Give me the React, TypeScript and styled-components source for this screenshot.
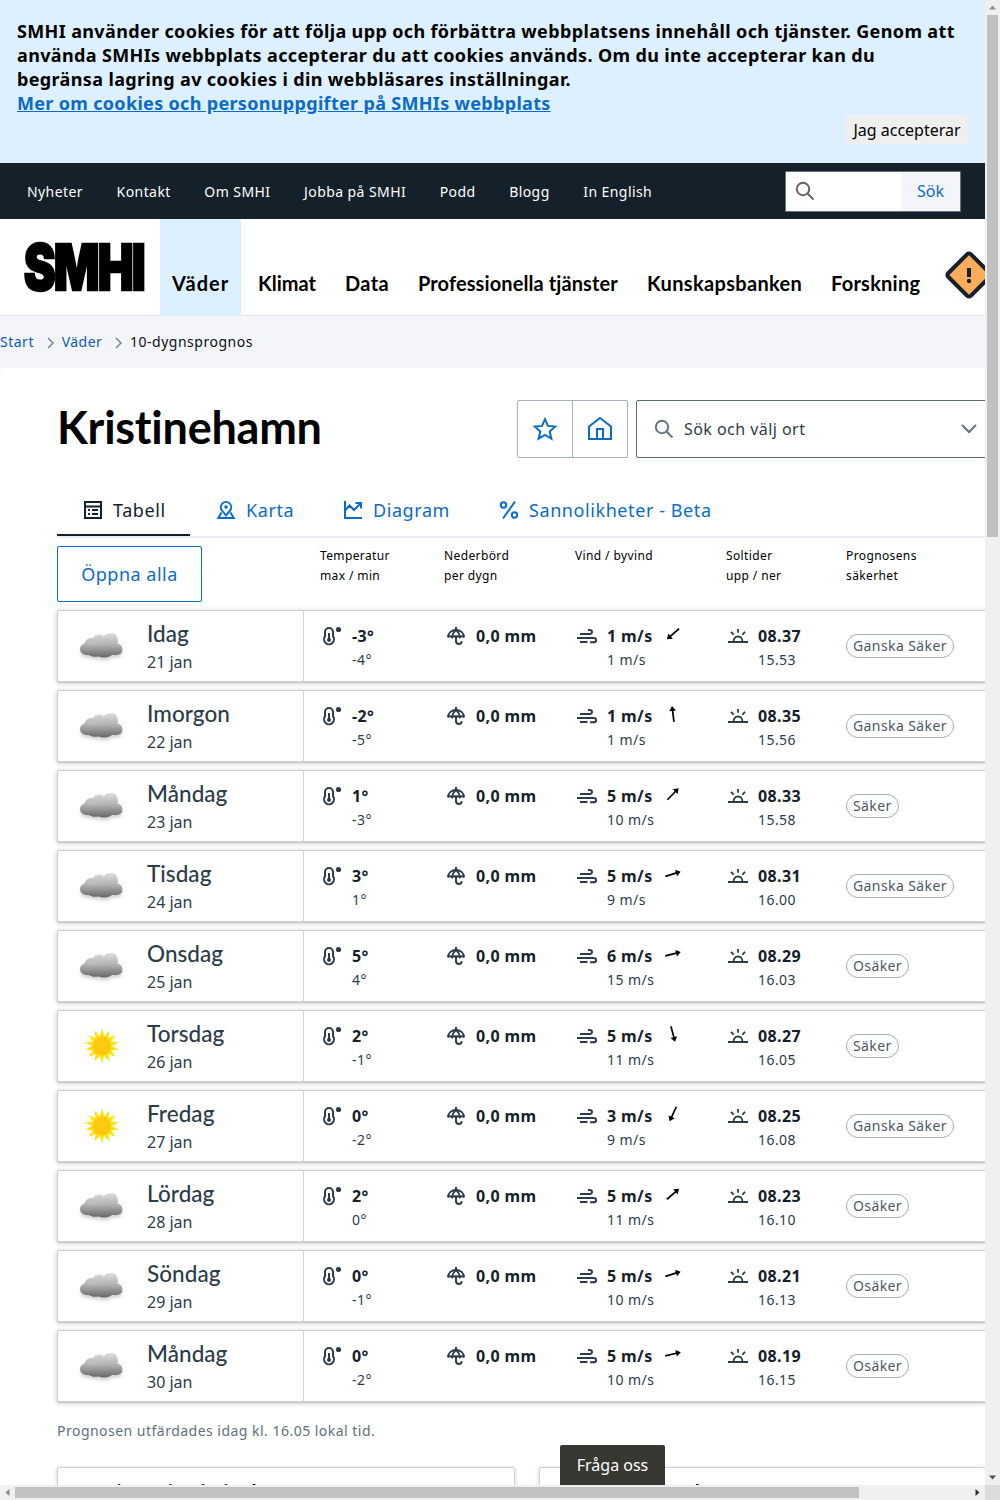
import React from 'react';
import styled, { createGlobalStyle, css } from 'styled-components';

const ink = '#14212b';
const slate = '#2c3c49';
const link = '#0b6bc8';
const sans = `'Noto Sans', 'Liberation Sans', sans-serif`;
const display = `Lato, 'Noto Sans', sans-serif`;

const GlobalStyle = createGlobalStyle`
  * { box-sizing: border-box; }
  html, body { margin: 0; padding: 0; }
  body { background: #fff; font-family: ${sans}; color: #000; overflow: hidden; }
  a { color: inherit; text-decoration: none; }
  button { font: inherit; }
`;

const Window = styled.div`
  display: grid;
  grid-template-columns: 985px 15px;
  grid-template-rows: 1485px 15px;
  width: 1000px;
  height: 1500px;
  overflow: hidden;
`;

const Viewport = styled.div`
  position: relative;
  overflow: hidden;
  background: #fff;
`;

const PageBody = styled.div`
  width: 1174px;
`;

/* ---------- cookie notice ---------- */
const Cookie = styled.section`
  width: 985px;
  height: 163px;
  padding: 19px 17px 0;
  background: #ddf0ff;
  font-weight: 700;
  font-size: 18px;
  line-height: 24px;
  letter-spacing: 0.36px;
  white-space: nowrap;
`;
const CookieLink = styled.a`
  color: ${link};
  text-decoration: underline;
  letter-spacing: 0.32px;
`;
const AcceptRow = styled.div`
  display: flex;
  justify-content: flex-end;
`;
const Accept = styled.button`
  width: 122px;
  height: 29px;
  border: 0;
  border-radius: 2px;
  padding: 1px 0 0;
  background: #efefef;
  color: #000;
  font-weight: 400;
  font-size: 16px;
  line-height: 28px;
`;

/* ---------- dark top bar ---------- */
const TopBar = styled.div`
  display: flex;
  justify-content: space-between;
  align-items: center;
  width: 985px;
  height: 56px;
  padding: 0 24px 0 27px;
  background: ${ink};
`;
const TopLinks = styled.nav`
  display: flex;
  gap: 33.6px;
  color: #fff;
  font-size: 14px;
  line-height: 24px;
  letter-spacing: 0.42px;
  padding-top: 2px;
`;
const TopSearch = styled.div`
  display: flex;
  width: 176px;
  height: 41px;
  border: 1px solid #65737e;
  border-radius: 1px;
  background: #fff;
`;
const TopInput = styled.div`
  flex: 1;
  padding: 7px 0 0 7px;
  svg { display: block; }
`;
const TopSubmit = styled.button`
  width: 59px;
  border: 0;
  padding: 0;
  background: #f4f5f8;
  color: ${link};
  font-size: 16px;
`;

/* ---------- main navigation ---------- */
const Header = styled.header`
  display: flex;
  height: 97px;
  border-bottom: 1px solid #e6e9ec;
`;
const LogoBox = styled.a`
  display: block;
  width: 160px;
  height: 96px;
  padding: 23px 0 0 23px;
  svg { display: block; overflow: visible; }
`;
const MainNav = styled.nav`
  display: flex;
  gap: 5px;
`;
const NavItem = styled.a<{ $w: number; $active?: boolean; $track: number }>`
  width: ${p => p.$w}px;
  height: 97px;
  padding: 49px 0 0 12px;
  background: ${p => (p.$active ? '#ddf0ff' : 'transparent')};
  font-family: ${display};
  font-weight: 700;
  font-size: 20px;
  line-height: 30px;
  letter-spacing: ${p => p.$track}px;
  white-space: nowrap;
`;
const Warning = styled.div`
  padding: 31px 0 0 12px;
`;

/* ---------- breadcrumb ---------- */
const Crumbs = styled.div`
  display: flex;
  align-items: center;
  height: 52px;
  background: #f4f5f8;
  color: #0a5ab4;
  font-size: 14px;
  line-height: 24px;
  letter-spacing: 0.5px;
  svg { margin: 2px 7px 0 11.7px; }
`;
const Current = styled.span`
  color: #0a0f14;
`;

/* ---------- title area ---------- */
const CrumbBase = styled.div`
  background: #f4f5f8;
`;
const Sheet = styled.main`
  width: 1174px;
  padding: 32px 0 0 57px;
  border-radius: 4px;
  background: #fff;
`;
const TitleRow = styled.div`
  display: flex;
  height: 58px;
`;
const Title = styled.h1`
  width: 460px;
  margin: 0;
  font-family: ${display};
  font-weight: 700;
  font-size: 45px;
  line-height: 55px;
  letter-spacing: -0.25px;
`;
const IconPair = styled.div`
  display: flex;
  width: 111px;
  margin-right: 8px;
  border: 1px solid #a3b0bb;
  border-radius: 2px;
`;
const IconButton = styled.button`
  display: flex;
  align-items: center;
  justify-content: center;
  flex: 1;
  border: 0;
  padding: 0;
  background: none;
  color: ${link};
  & + & { border-left: 1px solid #a3b0bb; }
`;
const PlaceSearch = styled.div`
  display: flex;
  align-items: center;
  width: 480px;
  padding-left: 15px;
  border: 1px solid #5b6c78;
  border-radius: 2px;
  color: ${slate};
  font-size: 16px;
  line-height: 24px;
  letter-spacing: 0.45px;
`;
const PlaceLabel = styled.span`
  width: 284px;
  padding-left: 8px;
`;

/* ---------- tabs ---------- */
const Tabs = styled.div`
  display: flex;
  height: 54px;
  margin-top: 26px;
  border-bottom: 2px solid #e9eef2;
`;
const Tab = styled.a<{ $w: number; $active?: boolean }>`
  display: flex;
  align-items: center;
  gap: 8px;
  width: ${p => p.$w}px;
  height: 52px;
  padding: 2px 0 0 24px;
  border-bottom: 2px solid ${p => (p.$active ? ink : 'transparent')};
  color: ${p => (p.$active ? ink : link)};
  font-size: 18px;
  line-height: 24px;
  letter-spacing: 0.58px;
  white-space: nowrap;
`;

/* ---------- forecast table ---------- */
const columns = css`
  display: grid;
  grid-template-columns: 124px 131px 151px 120px 1fr;
`;
const TableHead = styled.div`
  display: flex;
  height: 72px;
  padding-top: 8px;
`;
const OpenAll = styled.button`
  width: 145px;
  height: 56px;
  border: 1px solid ${link};
  border-radius: 2px;
  margin-right: 118px;
  padding: 0;
  background: #fff;
  color: ${link};
  font-size: 18px;
  letter-spacing: 0.5px;
`;
const HeadCells = styled.div`
  ${columns}
  flex: 1;
  font-size: 12px;
  line-height: 20px;
  letter-spacing: 0.38px;
  white-space: pre-line;
`;
const Rows = styled.div`
  display: flex;
  flex-direction: column;
  gap: 8px;
`;
const Row = styled.article`
  display: flex;
  width: 1060px;
  height: 72px;
  border: 1px solid #cdd2d9;
  border-radius: 2px;
  background: #fff;
  box-shadow: 0 1px 4px 1px rgba(0, 0, 0, 0.16), 0 1px 1px rgba(0, 0, 0, 0.12);
`;
const Day = styled.div`
  display: flex;
  width: 246px;
  border-right: 1px solid #cdd2d9;
`;
const Weather = styled.div`
  width: 89px;
  padding: 9px 0 0 18px;
  svg { display: block; overflow: visible; }
`;
const DayName = styled.div`
  height: 38px;
  padding-top: 8px;
  font-family: ${display};
  font-weight: 500;
  font-size: 22.5px;
  line-height: 30px;
  letter-spacing: 0.05px;
  color: ${slate};
`;
const DayDate = styled.div`
  padding-top: 1px;
  color: ${slate};
  font-size: 16px;
  line-height: 25px;
`;
const Cells = styled.div`
  ${columns}
  flex: 1;
  padding-left: 16px;
`;
const Cell = styled.div`
  display: flex;
  gap: 8px;
  padding-top: 13px;
  color: ${slate};
  svg { display: block; }
`;
const Primary = styled.div`
  color: ${ink};
  font-weight: 700;
  font-size: 16px;
  line-height: 24px;
  letter-spacing: 0.4px;
`;
const Secondary = styled.div`
  font-size: 14px;
  line-height: 24px;
  letter-spacing: 0.45px;
`;
const WindText = styled.div`
  width: 46px;
  white-space: nowrap;
`;
const Chip = styled.div`
  justify-self: start;
  height: 24px;
  margin-top: 23px;
  padding: 0 6px;
  border: 1px solid #a3b0bb;
  border-radius: 12px;
  color: #4a5863;
  font-size: 14px;
  line-height: 22px;
  letter-spacing: 0.4px;
`;
const Issued = styled.p`
  margin: 17px 0 24px;
  color: #5f717d;
  font-size: 14px;
  line-height: 24px;
  letter-spacing: 0.48px;
`;
const Cards = styled.div`
  display: flex;
  gap: 24px;
`;
const Card = styled.section`
  width: 458px;
  height: 160px;
  padding: 8.5px 15px;
  border: 1px solid #cdd2d9;
  border-radius: 2px;
  box-shadow: 0 1px 4px 1px rgba(0, 0, 0, 0.12);
  font-family: ${display};
  font-weight: 700;
  font-size: 21px;
  line-height: 30px;
`;
const AskUs = styled.button`
  position: absolute;
  left: 560px;
  bottom: 0;
  width: 105px;
  height: 40px;
  border: 0;
  border-radius: 2px 2px 0 0;
  padding: 0;
  background: #383833;
  color: #fff;
  font-size: 16px;
`;

/* ---------- scrollbars ---------- */
const VerticalBar = styled.div`
  display: flex;
  flex-direction: column;
  align-items: center;
  background: #f0f0f0;
`;
const HorizontalBar = styled.div`
  display: flex;
  align-items: center;
  background: #f0f0f0;
`;
const ArrowBox = styled.div`
  display: flex;
  align-items: center;
  justify-content: center;
  width: 15px;
  height: 15px;
  flex: none;
  svg { display: block; }
`;
const VerticalThumb = styled.div`
  width: 11px;
  height: 522px;
  margin-bottom: auto;
  background: #c1c1c1;
`;
const HorizontalThumb = styled.div`
  width: 844px;
  height: 11px;
  margin-right: auto;
  background: #c1c1c1;
`;
const Corner = styled.div`
  background: #dcdcdc;
`;

const BarArrow = ({ turn, color }: { turn: number; color: string }) => (
  <ArrowBox>
    <svg width="9" height="9" viewBox="0 0 9 9">
      <path d="M1 6.500h7L4.500 2.500z" fill={color} transform={`rotate(${turn} 4.5 4.5)`} />
    </svg>
  </ArrowBox>
);

const Magnifier = ({ color }: { color: string }) => (
  <svg width="24" height="24" viewBox="0 0 24 24" fill="none" stroke={color} strokeWidth="2">
    <circle cx="10" cy="10" r="6.200" />
    <path d="M14.500 14.500l6 6" />
  </svg>
);

const Chevron = () => (
  <svg width="9" height="12" viewBox="0 0 9 12" fill="none" stroke="#7d8d98" strokeWidth="1.600">
    <path d="M2 1l5 5-5 5" />
  </svg>
);

const Line = ({ children }: { children: React.ReactNode }) => (
  <svg width="24" height="24" viewBox="0 0 24 24" fill="none" stroke="currentColor" strokeWidth="2">
    {children}
  </svg>
);

const Thermometer = () => (
  <Line>
    <path d="M5 8a4 4 0 0 1 8 0v4.200a5 5 0 1 1-8 0z" />
    <path d="M9 9v7" />
    <circle cx="9" cy="16" r="2" fill="currentColor" stroke="none" />
    <circle cx="18.500" cy="5.500" r="2.600" fill="currentColor" stroke="none" />
  </Line>
);

const Umbrella = () => (
  <Line>
    <path d="M12 3v3M3.900 13.300C4.300 8.800 7.600 6 12 6s7.700 2.800 8.100 7.300" />
    <path d="M4 13.200c1-1.300 3.300-1.300 4.200 0 1-1.300 6.600-1.300 7.600 0 .900-1.300 3.200-1.300 4.200 0" />
    <path d="M8.300 13c.2-3 1.500-5.300 3.700-7 2.200 1.700 3.500 4 3.700 7" strokeWidth="1.800" />
    <path d="M12 12v5.300c0 3.600 5.700 3.600 5.700 0" />
  </Line>
);

const Wind = () => (
  <Line>
    <path d="M5 10h9.800c3 0 2.800-4 0-4h-1.800M2 14h16.500c3.400 0 3.400 4.300 0 4.300h-3.500M5 18h7.500" />
  </Line>
);

const Sunrise = () => (
  <Line>
    <path d="M2 18h20" />
    <path d="M7.600 17.500c0-6.700 8.800-6.700 8.800 0M12 5v3.800M4.900 7.800l2.800 2.800M19.100 7.800l-2.800 2.800" strokeWidth="1.800" />
  </Line>
);

const WindArrow = ({ angle }: { angle: number }) => (
  <svg width="24" height="24" viewBox="0 0 24 24">
    <g transform={`rotate(${angle} 12 10)`} fill="none" stroke="#000" strokeWidth="1.700">
      <path d="M4 10h12.500" />
      <path d="M15.200 6.600l4.800 3.400-4.800 3.400z" fill="#000" stroke="none" />
    </g>
  </svg>
);

const cloudOutline =
  'M4 29.300C4 26 6 24 8.500 23.500C9 20 12.500 17.500 17 18C18.500 15 24 13 28 16.300C31 11.500 41 12 41.300 18.500C42.200 20.500 42 22 41.300 23.800C45 24.500 46.800 27 46.300 30C46 34 42 35.800 36.500 34.800C33.500 37.500 27 38.200 22.500 36.400C19 37.200 15 36.700 13 35C8.500 35.500 4.500 33.500 4 29.300z';

const Cloud = () => (
  <svg width="52" height="52" viewBox="0 0 52 52">
    <defs>
      <linearGradient id="cloud" x1="0" y1="0" x2="0" y2="1">
        <stop offset="0" stopColor="#dcdcdc" />
        <stop offset="0.500" stopColor="#b0b0b0" />
        <stop offset="1" stopColor="#666" />
      </linearGradient>
      <filter id="soft" x="-20%" y="-20%" width="140%" height="150%">
        <feGaussianBlur stdDeviation="1.600" />
      </filter>
    </defs>
    <path d={cloudOutline} transform="translate(0 3)" fill="#999" opacity="0.400" filter="url(#soft)" />
    <path d={cloudOutline} fill="url(#cloud)" />
    <path d="M12 24.500c2-2 5-2 7 0 1-2 3-3 5-3" fill="none" stroke="#e6e6e6" strokeWidth="1" opacity="0.300" />
  </svg>
);

const rays = Array.from({ length: 28 }, (_, i) => {
  const r = i % 2 === 0 ? 17.3 : 10.4;
  const a = (i / 28) * Math.PI * 2 - Math.PI / 2;
  return `${(26 + r * Math.cos(a)).toFixed(2)},${(26 + r * Math.sin(a)).toFixed(2)}`;
}).join(' ');

const Sun = () => (
  <svg width="52" height="52" viewBox="0 0 52 52">
    <defs>
      <radialGradient id="sun">
        <stop offset="0" stopColor="#ffce12" />
        <stop offset="1" stopColor="#fdc60c" />
      </radialGradient>
    </defs>
    <polygon points={rays} fill="#ffe11a" />
    <circle cx="26" cy="26" r="9.200" fill="url(#sun)" />
  </svg>
);

type Forecast = {
  day: string; date: string; sky: 'cloud' | 'sun'; max: string; min: string;
  wind: string; gust: string; angle: number; up: string; down: string; certainty: string;
};

const forecasts: Forecast[] = [
  { day: 'Idag', date: '21 jan', sky: 'cloud', max: '-3°', min: '-4°', wind: '1 m/s', gust: '1 m/s', angle: 139, up: '08.37', down: '15.53', certainty: 'Ganska Säker' },
  { day: 'Imorgon', date: '22 jan', sky: 'cloud', max: '-2°', min: '-5°', wind: '1 m/s', gust: '1 m/s', angle: -97, up: '08.35', down: '15.56', certainty: 'Ganska Säker' },
  { day: 'Måndag', date: '23 jan', sky: 'cloud', max: '1°', min: '-3°', wind: '5 m/s', gust: '10 m/s', angle: -46, up: '08.33', down: '15.58', certainty: 'Säker' },
  { day: 'Tisdag', date: '24 jan', sky: 'cloud', max: '3°', min: '1°', wind: '5 m/s', gust: '9 m/s', angle: -17, up: '08.31', down: '16.00', certainty: 'Ganska Säker' },
  { day: 'Onsdag', date: '25 jan', sky: 'cloud', max: '5°', min: '4°', wind: '6 m/s', gust: '15 m/s', angle: -14, up: '08.29', down: '16.03', certainty: 'Osäker' },
  { day: 'Torsdag', date: '26 jan', sky: 'sun', max: '2°', min: '-1°', wind: '5 m/s', gust: '11 m/s', angle: 75, up: '08.27', down: '16.05', certainty: 'Säker' },
  { day: 'Fredag', date: '27 jan', sky: 'sun', max: '0°', min: '-2°', wind: '3 m/s', gust: '9 m/s', angle: 115, up: '08.25', down: '16.08', certainty: 'Ganska Säker' },
  { day: 'Lördag', date: '28 jan', sky: 'cloud', max: '2°', min: '0°', wind: '5 m/s', gust: '11 m/s', angle: -41, up: '08.23', down: '16.10', certainty: 'Osäker' },
  { day: 'Söndag', date: '29 jan', sky: 'cloud', max: '0°', min: '-1°', wind: '5 m/s', gust: '10 m/s', angle: -17, up: '08.21', down: '16.13', certainty: 'Osäker' },
  { day: 'Måndag', date: '30 jan', sky: 'cloud', max: '0°', min: '-2°', wind: '5 m/s', gust: '10 m/s', angle: -13, up: '08.19', down: '16.15', certainty: 'Osäker' },
];

const navItems = [
  { label: 'Väder', w: 81, track: 1, active: true },
  { label: 'Klimat', w: 82, track: 0 },
  { label: 'Data', w: 68, track: 0.4 },
  { label: 'Professionella tjänster', w: 224, track: 0.1 },
  { label: 'Kunskapsbanken', w: 179, track: 0.34 },
  { label: 'Forskning', w: 113, track: 0.25 },
];

const ForecastRow = ({ f }: { f: Forecast }) => (
  <Row>
    <Day>
      <Weather>{f.sky === 'cloud' ? <Cloud /> : <Sun />}</Weather>
      <div>
        <DayName>{f.day}</DayName>
        <DayDate>{f.date}</DayDate>
      </div>
    </Day>
    <Cells>
      <Cell>
        <Thermometer />
        <div><Primary>{f.max}</Primary><Secondary>{f.min}</Secondary></div>
      </Cell>
      <Cell>
        <Umbrella />
        <Primary>0,0 mm</Primary>
      </Cell>
      <Cell>
        <Wind />
        <WindText><Primary>{f.wind}</Primary><Secondary>{f.gust}</Secondary></WindText>
        <WindArrow angle={f.angle} />
      </Cell>
      <Cell>
        <Sunrise />
        <div><Primary>{f.up}</Primary><Secondary>{f.down}</Secondary></div>
      </Cell>
      <Chip>{f.certainty}</Chip>
    </Cells>
  </Row>
);

export default function App() {
  return (
    <Window>
      <GlobalStyle />
      <Viewport>
        <Cookie>
          SMHI använder cookies för att följa upp och förbättra webbplatsens innehåll och tjänster. Genom att<br />
          använda SMHIs webbplats accepterar du att cookies används. Om du inte accepterar kan du<br />
          begränsa lagring av cookies i din webbläsares inställningar.<br />
          <CookieLink href="#">Mer om cookies och personuppgifter på SMHIs webbplats</CookieLink>
          <AcceptRow><Accept>Jag accepterar</Accept></AcceptRow>
        </Cookie>
        <TopBar>
          <TopLinks>
            {['Nyheter', 'Kontakt', 'Om SMHI', 'Jobba på SMHI', 'Podd', 'Blogg', 'In English'].map(t => (
              <a href="#" key={t}>{t}</a>
            ))}
          </TopLinks>
          <TopSearch>
            <TopInput><Magnifier color="#666" /></TopInput>
            <TopSubmit>Sök</TopSubmit>
          </TopSearch>
        </TopBar>
        <PageBody>
          <Header>
            <LogoBox href="#">
              <svg width="122" height="52" viewBox="0 0 122 52">
                <text
                  x="1" y="48" fontFamily="Inter, sans-serif" fontWeight="900" fontSize="63.500"
                  letterSpacing="-2.500" transform="scale(0.755 1)" stroke="#000" strokeWidth="2.400"
                >
                  SMHI
                </text>
              </svg>
            </LogoBox>
            <MainNav>
              {navItems.map(n => (
                <NavItem href="#" key={n.label} $w={n.w} $active={n.active} $track={n.track}>{n.label}</NavItem>
              ))}
            </MainNav>
            <Warning>
              <svg width="50" height="50" viewBox="0 0 50 50">
                <rect x="9" y="9" width="32" height="32" rx="2.500" transform="rotate(45 25 25)" fill="#fbad5c" stroke={ink} strokeWidth="4" />
                <rect x="23" y="18" width="4" height="9" fill={ink} />
                <circle cx="25" cy="31" r="2.200" fill={ink} />
              </svg>
            </Warning>
          </Header>
          <Crumbs>
            <a href="#">Start</a><Chevron /><a href="#">Väder</a><Chevron /><Current>10-dygnsprognos</Current>
          </Crumbs>
          <CrumbBase>
            <Sheet>
              <TitleRow>
                <Title>Kristinehamn</Title>
                <IconPair>
                  <IconButton aria-label="Favorit">
                    <svg width="28" height="28" viewBox="0 0 28 28" fill="none" stroke="currentColor" strokeWidth="2">
                      <path d="M14 4.200l2.900 6.700 7.300.700-5.500 4.900 1.700 7.200L14 19.900l-6.400 3.800 1.700-7.200-5.500-4.900 7.300-.700z" />
                    </svg>
                  </IconButton>
                  <IconButton aria-label="Hem">
                    <svg width="28" height="28" viewBox="0 0 28 28" fill="none" stroke="currentColor" strokeWidth="2">
                      <path d="M3 24V11.500L14 3l11 8.500V24zM11 24V14h6v10" />
                    </svg>
                  </IconButton>
                </IconPair>
                <PlaceSearch>
                  <Magnifier color="#65737e" />
                  <PlaceLabel>Sök och välj ort</PlaceLabel>
                  <svg width="18" height="12" viewBox="0 0 18 12" fill="none" stroke="#65737e" strokeWidth="2">
                    <path d="M2 2l7 7 7-7" />
                  </svg>
                </PlaceSearch>
              </TitleRow>
              <Tabs>
                <Tab href="#" $w={133} $active>
                  <Line>
                    <path d="M4 4h16v16H4zM4 8.500h16" />
                    <path d="M7 12h2M11 12h6M7 16h2M11 16h6" />
                  </Line>
                  Tabell
                </Tab>
                <Tab href="#" $w={127}>
                  <Line>
                    <path d="M12 17.500L8 12.500A5.200 5.200 0 1 1 16 12.500z" />
                    <circle cx="12" cy="9" r="1.800" fill="currentColor" stroke="none" />
                    <path d="M7.500 14.500L4.300 20h15.400l-3.200-5.500" />
                  </Line>
                  Karta
                </Tab>
                <Tab href="#" $w={156}>
                  <Line>
                    <path d="M4 3v17h17" />
                    <path d="M4.500 12l4-4.500 4.500 4.500 6-6M14.500 5H20v5.500" />
                  </Line>
                  Diagram
                </Tab>
                <Tab href="#" $w={240}>
                  <Line>
                    <path d="M18 3.500L6 20.500" />
                    <circle cx="6.500" cy="7" r="2.700" />
                    <circle cx="17.500" cy="17" r="2.700" />
                  </Line>
                  Sannolikheter - Beta
                </Tab>
              </Tabs>
              <TableHead>
                <OpenAll>Öppna alla</OpenAll>
                <HeadCells>
                  <div>{'Temperatur\nmax / min'}</div>
                  <div>{'Nederbörd\nper dygn'}</div>
                  <div>Vind / byvind</div>
                  <div>{'Soltider\nupp / ner'}</div>
                  <div>{'Prognosens\nsäkerhet'}</div>
                </HeadCells>
              </TableHead>
              <Rows>
                {forecasts.map(f => <ForecastRow key={f.date} f={f} />)}
              </Rows>
              <Issued>Prognosen utfärdades idag kl. 16.05 lokal tid.</Issued>
              <Cards>
                <Card>Varningar i Kristinehamn</Card>
                <Card>Läs mer om väder</Card>
              </Cards>
            </Sheet>
          </CrumbBase>
        </PageBody>
        <AskUs>Fråga oss</AskUs>
      </Viewport>
      <VerticalBar>
        <BarArrow turn={0} color="#8b8b8b" />
        <VerticalThumb />
        <BarArrow turn={180} color="#505050" />
      </VerticalBar>
      <HorizontalBar>
        <BarArrow turn={-90} color="#8b8b8b" />
        <HorizontalThumb />
        <BarArrow turn={90} color="#303030" />
      </HorizontalBar>
      <Corner />
    </Window>
  );
}
